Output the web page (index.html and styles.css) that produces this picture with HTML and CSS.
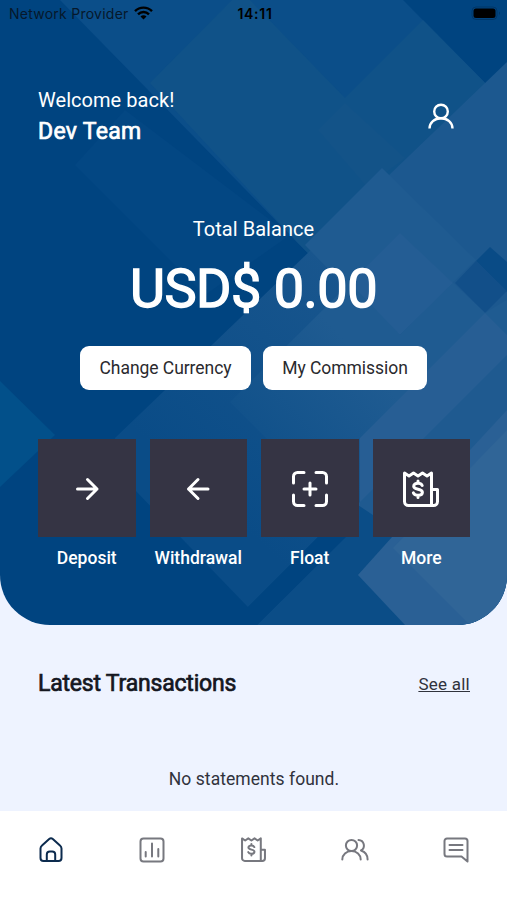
FILE: index.html
```html
<!DOCTYPE html>
<html lang="en">
<head>
    <meta charset="UTF-8">
    <meta name="viewport" content="width=device-width, initial-scale=1.0">
    <title>Wallet</title>
    <link rel="stylesheet" href="styles.css">
</head>
<body>

    <!-- shared icon, used in the tiles and in the tab bar -->
    <svg class="defs" width="0" height="0">
        <symbol id="receipt" viewBox="0 0 36 36">
            <path d="M1.500 2 6 5l4.500-3L15 5l4.500-3L24 5l4.500-3V34.500H5.500a4 4 0 0 1-4-4zM28.500 18.500h6v12a4 4 0 0 1-4 4h-2"/>
            <path d="M19.200 14.500c-.8-1.800-2.200-2.300-4.200-2.300-2.500 0-4.300 1.200-4.300 3 0 4 8.700 2 8.700 6 0 1.900-1.900 3-4.400 3-2.200 0-3.800-.7-4.600-2.400M15 10v2M15 24.500v2"/>
        </symbol>
    </svg>

    <section class="hero">
        <svg class="hero-bg" viewBox="0 0 507 625">
            <defs>
                <linearGradient id="band" gradientUnits="userSpaceOnUse" x1="190" y1="480" x2="400" y2="250">
                    <stop offset="0" stop-color="#0a4c87"/>
                    <stop offset="1" stop-color="#1c588f"/>
                </linearGradient>
                <linearGradient id="fade" gradientUnits="userSpaceOnUse" x1="270" y1="520" x2="400" y2="400">
                    <stop offset="0" stop-color="#0c4e88"/>
                    <stop offset="1" stop-color="#1f5b91"/>
                </linearGradient>
            </defs>
            <path fill="#034783" d="M125 110 75 165 205 295 290 235z"/>
            <path fill="#0b4e89" d="M60 0H403L507 105V456L295 240z"/>
            <path fill="#105288" d="M150 83 232 0H250L345 98 423 20 507 105V456L295 240z"/>
            <path fill="#135388" d="M318 130 345 103 405 158 367 187z"/>
            <path fill="url(#band)" d="M507 62 115 438 135 490 248 607 507 348z"/>
            <path fill="#1f5b91" d="M382 168 305 245 395 338 476 260z"/>
            <path fill="#245d94" d="M400 233 350 283 400 335 453 283z"/>
            <path fill="#094b86" d="M490 247 476 261 507 292V262z"/>
            <path fill="#124f89" d="M476 261 455 283 485 313 507 291z"/>
            <path fill="url(#fade)" d="M230 402 350 283 400 335 453 283 485 313 507 300V540H370L277 449z"/>
            <path fill="#0b4d87" d="M345 538 257 625H507V500H383z"/>
            <path fill="#004480" d="M323 532 248 607 257 625 348 534z"/>
            <path fill="#275e94" d="M485 313 507 335V385L360 532V438z"/>
            <path fill="#1f5a90" d="M507 355 358 504V575L507 430z"/>
            <path fill="#0b4d87" d="M358 505 410 540 372 560 358 575z"/>
            <path fill="#2a6095" d="M507 410 470 450 358 575 405 625H507z"/>
            <path fill="#306597" d="M507 430 393 548 470 625H507z"/>
            <path fill="#02508a" d="M0 381 55 435 0 487z"/>
        </svg>

        <div class="status-bar">
            <div class="carrier">
                <span>Network Provider</span>
                <svg width="19" height="14" viewBox="0 0 19 14" fill="none" stroke="#000" stroke-width="2.400">
                    <path d="M1 5.200a12 12 0 0 1 17 0M4 8.300a7.800 7.800 0 0 1 11 0"/>
                    <path d="M6.500 10.500a4.200 4.200 0 0 1 6 0l-3 3z" fill="#000" stroke="none"/>
                </svg>
            </div>
            <span class="clock">14:11</span>
            <svg class="battery" width="30" height="15" viewBox="0 0 30 15">
                <rect x="1" y="1" width="25" height="12.500" rx="4" fill="none" stroke="#000" stroke-opacity=".2"/>
                <rect x="2.500" y="2.500" width="22" height="9.500" rx="2.500"/>
                <path d="M28 5.500q2 1.700 0 3.500z" opacity=".2"/>
            </svg>
        </div>

        <header class="greeting">
            <div>
                <p class="welcome">Welcome back!</p>
                <h1 class="user-name">Dev Team</h1>
            </div>
            <svg class="profile" width="28" height="28" viewBox="0 0 28 28">
                <circle cx="14" cy="8.500" r="6.800"/>
                <path d="M2.500 25.500c0-6 5.200-10.200 11.500-10.200S25.500 19.500 25.500 25.500"/>
            </svg>
        </header>

        <div class="balance">
            <p class="balance-label">Total Balance</p>
            <p class="amount">USD$ 0.00</p>
            <div class="buttons">
                <button class="btn-currency">Change Currency</button>
                <button class="btn-commission">My Commission</button>
            </div>
        </div>

        <div class="actions">
            <a class="action">
                <span class="tile"><svg width="36" height="36" viewBox="0 0 36 36"><path d="M8.500 18H28M18.500 8.500 28 18l-9.500 9.500"/></svg></span>
                <span>Deposit</span>
            </a>
            <a class="action">
                <span class="tile"><svg width="36" height="36" viewBox="0 0 36 36"><path d="M28 18H8.500M18 8.500 8.500 18l9.500 9.500"/></svg></span>
                <span>Withdrawal</span>
            </a>
            <a class="action">
                <span class="tile"><svg width="36" height="36" viewBox="0 0 36 36"><path d="M1.500 12V5.500a4 4 0 0 1 4-4H12M24 1.500h6.500a4 4 0 0 1 4 4V12M34.500 24v6.500a4 4 0 0 1-4 4H24M12 34.500H5.500a4 4 0 0 1-4-4V24M18 12v12M12 18h12"/></svg></span>
                <span>Float</span>
            </a>
            <a class="action">
                <span class="tile"><svg width="36" height="36"><use href="#receipt"/></svg></span>
                <span>More</span>
            </a>
        </div>
    </section>

    <main class="transactions">
        <div class="section-head">
            <h2>Latest Transactions</h2>
            <a class="see-all">See all</a>
        </div>
        <p class="empty">No statements found.</p>
    </main>

    <nav class="tab-bar">
        <a class="tab active">
            <svg width="26" height="26" viewBox="0 0 26 26"><path d="M2.500 11.500a4 4 0 0 1 1.500-3L11.200 2q1.800-1.500 3.600 0L22 8.500a4 4 0 0 1 1.500 3V21a3 3 0 0 1-3 3h-15a3 3 0 0 1-3-3zM8.800 24v-6.500a3 3 0 0 1 3-3h2.400a3 3 0 0 1 3 3V24"/></svg>
        </a>
        <a class="tab">
            <svg width="26" height="26" viewBox="0 0 26 26"><rect x="1.500" y="1.500" width="23" height="23" rx="3"/><path d="M6.700 15v4.500M13 6.500v13M19.300 12v7.500"/></svg>
        </a>
        <a class="tab">
            <svg class="tab-receipt" width="25" height="25"><use href="#receipt"/></svg>
        </a>
        <a class="tab">
            <svg width="28" height="26" viewBox="0 0 28 26"><circle cx="10.500" cy="8.500" r="5.600"/><path d="M1.300 22.500c0-4.800 4-8.400 9.200-8.400s9.200 3.600 9.200 8.400M17.500 3a5.600 5.600 0 0 1 2.500 10.500c4 1.300 6.600 4.600 6.600 9"/></svg>
        </a>
        <a class="tab">
            <svg width="26" height="26" viewBox="0 0 26 26"><path d="M24.500 24.500V4a2.500 2.500 0 0 0-2.500-2.500H4A2.500 2.500 0 0 0 1.500 4v13A2.500 2.500 0 0 0 4 19.500h14.500zM6.500 8h13M6.500 13h13"/></svg>
        </a>
    </nav>

</body>
</html>
```
FILE: styles.css
```css
* {
    box-sizing: border-box;
}
body {
    margin: 0;
    height: 900px;
    display: flex;
    flex-direction: column;
    background: #eef3ff;
    color: #15171f;
    font-family: Roboto, sans-serif;
}
h1, h2, p {
    margin: 0;
}
.defs {
    display: none;
}

/* blue header card */
.hero {
    position: relative;
    height: 625px;
    border-radius: 0 0 50px 50px;
    overflow: hidden;
    background: #004480;
    color: #fff;
}
.hero-bg {
    position: absolute;
    inset: 0;
    width: 100%;
    height: 100%;
}
.status-bar, .greeting, .balance, .actions {
    position: relative;
}
.status-bar {
    display: grid;
    grid-template-columns: 1fr auto 1fr;
    align-items: center;
    height: 28px;
    padding: 0 6px 0 9px;
    color: #000;
    font-family: Inter, sans-serif;
    font-size: 14px;
    line-height: 28px;
}
.carrier {
    display: flex;
    align-items: center;
    gap: 5px;
    color: #06182b;
    letter-spacing: 0.250px;
    white-space: nowrap;
}
.carrier svg {
    margin-top: -2px;
}
.clock {
    font-weight: 600;
    letter-spacing: 0.700px;
}
.battery {
    justify-self: end;
    margin-top: -1px;
}
.greeting {
    display: flex;
    justify-content: space-between;
    align-items: center;
    padding: 60px 52px 0 38px;
}
.welcome {
    font-size: 20px;
    line-height: 25px;
    letter-spacing: 0.050px;
}
.user-name {
    margin-top: 4px;
    font-size: 23px;
    font-weight: 400;
    line-height: 30px;
    letter-spacing: 0.300px;
    -webkit-text-stroke: 0.700px;
}
.profile {
    margin-top: -2px;
    fill: none;
    stroke: #fff;
    stroke-width: 2.400;
}
.balance {
    padding-top: 70px;
    text-align: center;
}
.balance-label {
    font-size: 20px;
    line-height: 25px;
    letter-spacing: 0.050px;
}
.amount {
    margin-top: 15px;
    font-size: 54px;
    font-weight: 400;
    line-height: 64px;
    letter-spacing: -0.500px;
    -webkit-text-stroke: 1.400px;
}
.buttons {
    display: flex;
    justify-content: center;
    gap: 12px;
    margin-top: 24.500px;
}
.buttons button {
    height: 44px;
    padding: 0;
    border: none;
    border-radius: 9px;
    background: #fff;
    color: #2a2a2e;
    font-family: inherit;
    font-size: 17.500px;
    letter-spacing: -0.050px;
}
.btn-currency {
    width: 171px;
}
.btn-commission {
    width: 164px;
}
.actions {
    display: grid;
    grid-template-columns: repeat(4, 1fr);
    gap: 14px;
    padding: 49.500px 37px 0 38px;
}
.action {
    display: flex;
    flex-direction: column;
    align-items: center;
    gap: 9px;
    font-size: 17.500px;
    font-weight: 500;
    line-height: 24px;
}
.tile {
    display: flex;
    justify-content: center;
    align-items: center;
    width: 100%;
    height: 98px;
    padding-top: 2px;
    background: #353444;
}
.tile svg {
    fill: none;
    stroke: #fff;
    stroke-width: 3;
    stroke-linecap: round;
    stroke-linejoin: round;
}

/* transactions */
.transactions {
    flex: 1;
    padding: 44px 37px 0 38px;
}
.section-head {
    display: flex;
    justify-content: space-between;
    align-items: center;
}
.section-head h2 {
    font-size: 23px;
    font-weight: 400;
    line-height: 30px;
    letter-spacing: -0.200px;
    -webkit-text-stroke: 0.700px;
}
.see-all {
    color: #30323c;
    font-size: 17px;
    letter-spacing: 0.250px;
    text-decoration: underline;
}
.empty {
    margin-top: 68px;
    color: #30323c;
    font-size: 17.500px;
    line-height: 24px;
    letter-spacing: 0.050px;
    text-align: center;
}

/* bottom tabs */
.tab-bar {
    display: grid;
    grid-template-columns: repeat(5, 1fr);
    height: 89px;
    padding-top: 25.500px;
    background: #fff;
}
.tab {
    display: flex;
    justify-content: center;
    align-items: flex-start;
    color: #77787f;
}
.tab svg {
    fill: none;
    stroke: currentColor;
    stroke-width: 2;
    stroke-linecap: round;
    stroke-linejoin: round;
}
.tab .tab-receipt {
    margin-top: 0.500px;
    stroke-width: 2.900;
}
.tab.active {
    color: #0c2b4e;
}
```
